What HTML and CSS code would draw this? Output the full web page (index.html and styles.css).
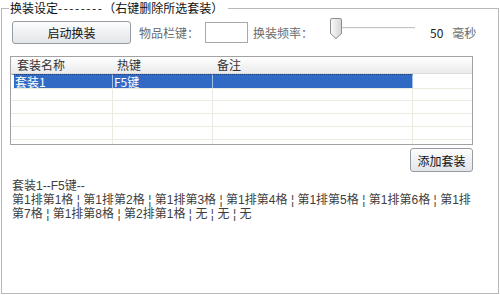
FILE: index.html
```html
<!DOCTYPE html>
<html lang="zh">
<head>
<meta charset="utf-8">
<title>换装设定</title>
<link rel="stylesheet" href="styles.css">
</head>
<body>

<fieldset class="group">
  <legend class="group-title">换装设定<span class="dashes">--------</span>（右键删除所选套装）</legend>

  <div class="toolbar">
    <button class="btn btn-start">启动换装</button>
    <span class="label">物品栏键：</span>
    <input class="key-box" type="text">
    <span class="label label-rate">换装频率：</span>
    <svg class="slider" width="86" height="22" viewBox="0 0 86 22">
      <defs>
        <linearGradient id="thumb" x1="0" y1="0" x2="1" y2="0">
          <stop offset="0" stop-color="#fbfbfb"/>
          <stop offset="1" stop-color="#d4d4d4"/>
        </linearGradient>
      </defs>
      <line x1="12" y1="9.5" x2="85" y2="9.5" stroke="#c4c4c4"/>
      <line x1="12" y1="10.5" x2="85" y2="10.5" stroke="#f4f4f4"/>
      <path d="M0.5 2 Q0.5 0.5 2 0.5 H10 Q11.5 0.5 11.5 2 V15.5 L6 20.5 L0.5 15.5 Z" fill="url(#thumb)" stroke="#8e8e8e"/>
    </svg>
    <span class="value">50</span>
    <span class="unit">毫秒</span>
  </div>

  <div class="list">
    <div class="list-head">
      <span>套装名称</span><span>热键</span><span>备注</span><span></span>
    </div>
    <div class="list-row selected">
      <span>套装1</span><span>F5键</span><span></span><span></span>
    </div>
    <div class="list-row"><span></span><span></span><span></span><span></span></div>
    <div class="list-row"><span></span><span></span><span></span><span></span></div>
    <div class="list-row"><span></span><span></span><span></span><span></span></div>
    <div class="list-row"><span></span><span></span><span></span><span></span></div>
    <div class="list-row"><span></span><span></span><span></span><span></span></div>
  </div>

  <div class="actions">
    <button class="btn btn-add">添加套装</button>
  </div>

  <p class="summary">套装1--F5键--<br>第1排第1格<span class="sep">¦</span>第1排第2格<span class="sep">¦</span>第1排第3格<span class="sep">¦</span>第1排第4格<span class="sep">¦</span>第1排第5格<span class="sep">¦</span>第1排第6格<span class="sep">¦</span>第1排<br>第7格<span class="sep">¦</span>第1排第8格<span class="sep">¦</span>第2排第1格<span class="sep">¦</span>无<span class="sep">¦</span>无<span class="sep">¦</span>无</p>
</fieldset>

</body>
</html>
```

FILE: styles.css
```css
body {
  margin: 0;
  background: #fff;
  font-family: "Noto Sans CJK SC", "DejaVu Sans", sans-serif;
  font-size: 12px;
}

.group {
  box-sizing: border-box;
  width: 498px;
  min-width: 0;
  height: 294px;
  margin: 0 0 0 1px;
  padding: 4px 25px 0 10px;
  border: 1px solid #b8b8b8;
}

.group-title {
  margin-left: -3px;
  padding: 0 5px 0 1px;
  line-height: 16px;
  color: #111;
}

.dashes {
  letter-spacing: 1.5px;
}

.toolbar {
  display: flex;
  align-items: center;
  height: 24px;
  white-space: nowrap;
}

.toolbar > * {
  flex-shrink: 0;
}

.btn {
  font: inherit;
  color: #111;
  padding: 0;
  border: 1px solid #959ba3;
  border-radius: 3px;
  background: linear-gradient(#fdfdfd, #e3e5e9);
}

.btn-start {
  width: 119px;
  height: 23px;
}

.label {
  color: #6b6b6b;
  margin-left: 8px;
}

.label-rate {
  margin-left: 5px;
}

.key-box {
  box-sizing: border-box;
  width: 43px;
  height: 21px;
  margin: 0 0 0 6px;
  padding: 0;
  border: 1px solid #a8a8a8;
}

.slider {
  align-self: flex-start;
  margin: -2px 0 0 17px;
}

.value {
  margin-left: 14px;
  color: #222;
}

.unit {
  margin-left: 9px;
  color: #6b6b6b;
}

.list {
  box-sizing: border-box;
  height: 89px;
  margin: 12px 0 0 -2px;
  border: 1px solid #a2a2a2;
  overflow: hidden;
}

.list-head,
.list-row {
  display: grid;
  grid-template-columns: 102px 100px 200px 1fr;
}

.list-head {
  box-sizing: border-box;
  height: 17px;
  line-height: 16px;
  color: #333;
  border-bottom: 1px solid #dcdcdc;
  background: linear-gradient(#ffffff, #ebebeb);
}

.list-head span {
  padding-left: 4px;
}

.list-head span:first-child {
  padding-left: 6px;
}

.list-row {
  box-sizing: border-box;
  height: 13px;
  line-height: 12px;
}

.list-row span {
  box-sizing: border-box;
  padding-left: 1px;
  border-right: 1px solid #ecebe2;
  border-bottom: 1px solid #ecebe2;
}

.list-row span:last-child {
  border-right: none;
}

.list-row.selected {
  height: 14px;
  line-height: 13px;
}

.list-row.selected span {
  color: #fff;
  background: #316ac5;
  border-top: 1px dotted #1c3f80;
  border-right-color: #9cc0e6;
}

.list-row.selected span:first-child {
  border-left: 3px solid #fff;
}

.list-row.selected span:last-child {
  background: #fff;
  border-top: none;
}

.actions {
  display: flex;
  justify-content: flex-end;
  margin-top: 3px;
}

.btn-add {
  width: 63px;
  height: 24px;
}

.summary {
  margin: 7px 0 0;
  font-family: "Liberation Sans", "Noto Sans CJK SC", sans-serif;
  line-height: 14px;
  color: #3e3e3e;
  white-space: nowrap;
}

.sep {
  display: inline-block;
  width: 10px;
  text-align: center;
}
```
